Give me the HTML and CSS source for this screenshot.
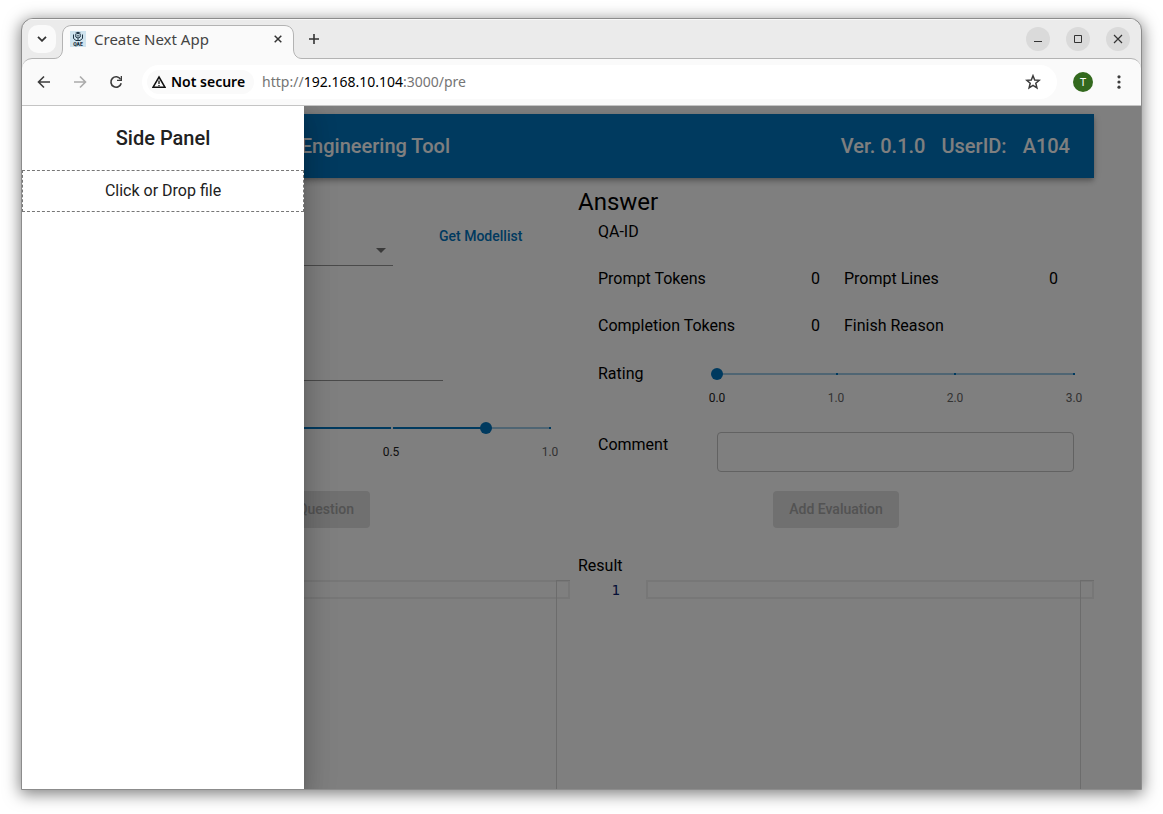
FILE: index.html
```html
<!DOCTYPE html>
<html lang="en">
<head>
<meta charset="utf-8">
<title>Create Next App</title>
<link rel="stylesheet" href="styles.css">
</head>
<body>
<div class="window">
  <header class="tabstrip">
    <button class="tab-search" aria-label="Search tabs">
      <svg width="10" height="6" viewBox="0 0 10 6"><path d="M1 .8 5 4.8 9 .8" fill="none" stroke="#333" stroke-width="1.8"/></svg>
    </button>
    <div class="tab">
      <svg class="tab-shape" width="248" height="34" viewBox="0 0 248 34">
        <path d="M0 33.5C5 33.5 8.500 30 8.500 24V10C8.500 4 12 .5 18 .5H230C236 .5 239.500 4 239.500 10V24C239.500 30 243 33.500 248 33.500V35H0Z" fill="#fafafa"/>
        <path d="M0 33.5C5 33.5 8.500 30 8.500 24V10C8.500 4 12 .5 18 .5H230C236 .5 239.500 4 239.500 10V24C239.500 30 243 33.500 248 33.500" fill="none" stroke="#b3b3b3"/>
      </svg>
      <svg class="favicon" width="16" height="16" viewBox="0 0 16 16">
        <rect width="16" height="16" fill="#cfe3ee"/>
        <path d="M5 2 8 .8 11 2 8 3.200Z" fill="#1d3242"/>
        <path d="M5.800 3V6Q8 8.500 10.200 6V3M3.500 3.500V7.500L6 9.500H10L12.500 7.500V3.500M8 7.500V10" fill="none" stroke="#1d3242"/>
        <path d="M7 4.500H9M7 6H9" stroke="#1d3242" stroke-width=".6"/>
        <text x="8" y="15" text-anchor="middle" font-family="Roboto, sans-serif" font-size="5" font-weight="900" fill="#1d3242">QAE</text>
      </svg>
      <span class="tab-title">Create Next App</span>
      <button class="icon-button" aria-label="Close tab">
        <svg width="8" height="8" viewBox="0 0 8 8"><path d="M.7 .7 7.300 7.300M7.300 .7 .7 7.300" stroke="#333" stroke-width="1.500"/></svg>
      </button>
    </div>
    <button class="icon-button new-tab" aria-label="New tab">
      <svg width="12" height="12" viewBox="0 0 12 12"><path d="M6 1V11M1 6H11" stroke="#333" stroke-width="1.600"/></svg>
    </button>
    <div class="window-controls">
      <button class="round" aria-label="Minimize"><svg width="10" height="10" viewBox="0 0 10 10"><path d="M1 7.500H9" stroke="#333"/></svg></button>
      <button class="round" aria-label="Maximize"><svg width="10" height="10" viewBox="0 0 10 10"><path d="M1.500 1.500H8.500V8.500H1.500Z" fill="none" stroke="#333"/></svg></button>
      <button class="round" aria-label="Close"><svg width="10" height="10" viewBox="0 0 10 10"><path d="M1 1 9 9M9 1 1 9" stroke="#333" stroke-width="1.200"/></svg></button>
    </div>
  </header>

  <nav class="toolbar">
    <div class="nav-buttons">
      <button class="icon-button" aria-label="Back"><svg width="14" height="14" viewBox="0 0 14 14"><path d="M13 7H2M7 1.500 1.500 7 7 12.500" fill="none" stroke="#3c3c3c" stroke-width="1.600"/></svg></button>
      <button class="icon-button" aria-label="Forward" disabled><svg width="14" height="14" viewBox="0 0 14 14"><path d="M1 7H12M7 1.500 12.500 7 7 12.500" fill="none" stroke="#ababab" stroke-width="1.600"/></svg></button>
      <button class="icon-button" aria-label="Reload"><svg width="14" height="14" viewBox="0 0 14 14"><path d="M11.600 4.300A5.200 5.200 0 1 0 12.200 8.200" fill="none" stroke="#3c3c3c" stroke-width="1.600"/><path d="M13 1V6H8V4.700H11.700V1Z" fill="#3c3c3c"/></svg></button>
    </div>
    <div class="omnibox">
      <button class="security">
        <svg width="14" height="14" viewBox="0 0 14 14"><path d="M7 2 13 12.300H1Z" fill="none" stroke="#111" stroke-width="1.500"/><path d="M7 5.500V9M7 9.900V11.200" stroke="#111" stroke-width="1.300"/></svg>
        <span>Not secure</span>
      </button>
      <span class="url">http://<b>192.168.10.104</b>:3000/pre</span>
      <button class="icon-button star" aria-label="Bookmark"><svg width="16" height="16" viewBox="0 0 16 16"><path d="M8 1.700 9.700 6 14.300 6.300 10.800 9.300 11.900 13.800 8 11.400 4.100 13.800 5.200 9.300 1.700 6.300 6.300 6Z" fill="none" stroke="#3c3c3c" stroke-width="1.500"/></svg></button>
    </div>
    <button class="avatar">T</button>
    <button class="icon-button menu" aria-label="Menu"><svg width="4" height="14" viewBox="0 0 4 14"><g fill="#3c3c3c"><circle cx="2" cy="1.800" r="1.600"/><circle cx="2" cy="7" r="1.600"/><circle cx="2" cy="12.200" r="1.600"/></g></svg></button>
  </nav>

  <div class="viewport">
    <div class="app">
      <div class="appbar">
        <h1 class="appbar-title">Engineering Tool</h1>
        <div class="appbar-info"><span>Ver. 0.1.0</span><span>UserID:</span><span>A104</span></div>
      </div>
      <main class="columns">
        <section class="column question">
          <div class="model-row">
            <div class="select-wrap">
              <select class="select" aria-label="Model"><option></option></select>
              <svg class="select-arrow" width="10" height="5" viewBox="0 0 10 5"><path d="M0 0H10L5 5Z" fill="#757575"/></svg>
            </div>
            <button class="text-button">Get Modellist</button>
          </div>
          <div class="prompt-row"><input class="line-input" type="text" aria-label="System prompt"></div>
          <div class="temperature-row">
            <div class="slider">
              <div class="slider-line">
                <div class="rail"><div class="fill" style="width:80%"></div></div>
                <div class="ticks"><i class="passed"></i><i class="passed"></i><i></i></div>
                <input type="range" min="0" max="1" step="0.1" value="0.8" aria-label="Temperature">
              </div>
              <div class="marks"><span></span><span class="active">0.5</span><span>1.0</span></div>
            </div>
          </div>
          <button class="contained send" disabled>Question</button>
          <div class="editor-title"></div>
          <div class="editor">
            <div class="gutter"></div><div class="current-line"></div><div class="ruler"></div>
          </div>
        </section>

        <section class="column">
          <div class="answer">
            <h2 class="heading">Answer</h2>
            <div class="body">
              <div class="stats">
                <div class="stat"><span>QA-ID</span></div><div class="stat"></div>
                <div class="stat"><span>Prompt Tokens</span><span>0</span></div>
                <div class="stat"><span>Prompt Lines</span><span>0</span></div>
                <div class="stat"><span>Completion Tokens</span><span>0</span></div>
                <div class="stat"><span>Finish Reason</span></div>
              </div>
              <div class="field rating">
                <label for="rating">Rating</label>
                <div class="slider">
                  <div class="slider-line">
                    <div class="rail"><div class="fill" style="width:0%"></div></div>
                    <div class="ticks"><i></i><i></i><i></i><i></i></div>
                    <input id="rating" type="range" min="0" max="3" step="0.1" value="0">
                  </div>
                  <div class="marks"><span class="active">0.0</span><span>1.0</span><span>2.0</span><span>3.0</span></div>
                </div>
              </div>
              <div class="field">
                <label for="comment">Comment</label>
                <input id="comment" class="outlined" type="text">
              </div>
            </div>
          </div>
          <button class="contained" disabled>Add Evaluation</button>
          <div class="editor-title">Result</div>
          <div class="editor">
            <div class="gutter">1</div><div class="current-line"></div><div class="ruler"></div>
          </div>
        </section>
      </main>
    </div>
    <div class="backdrop"></div>
    <aside class="drawer">
      <h2 class="drawer-title">Side Panel</h2>
      <button class="dropzone">Click or Drop file</button>
    </aside>
  </div>
</div>
</body>
</html>
```
FILE: styles.css
```css
* { box-sizing: border-box; }

body {
  margin: 0;
  height: 100vh;
  padding: 18px 21px 24px;
  background: #fff;
  font-family: Roboto, sans-serif;
  font-size: 16px;
  line-height: 24px;
  color: #000;
  overflow: hidden;
}

h1, h2 { margin: 0; font-weight: 500; }
button { margin: 0; padding: 0; border: 0; background: none; font: inherit; color: inherit; }
svg { display: block; flex: none; }

.window {
  height: 100%;
  display: flex;
  flex-direction: column;
  border: 1px solid #8c8c8c;
  border-radius: 12px 12px 0 0;
  background: #ebebeb;
  box-shadow: 0 3px 16px 1px rgba(0, 0, 0, .5);
  overflow: hidden;
}

/* Tab strip */
.tabstrip {
  flex: none;
  height: 39px;
  display: flex;
  align-items: center;
  padding: 0 11px 0 6px;
  box-shadow: inset 0 1px #f8f8f8;
  font-family: "Noto Sans", sans-serif;
}
.icon-button { display: flex; align-items: center; justify-content: center; width: 20px; height: 20px; flex: none; }
.tab-search {
  width: 28px; height: 28px;
  display: flex; align-items: center; justify-content: center;
  border-radius: 10px;
  background: #fafafa;
}
.tab {
  position: relative;
  width: 232px;
  height: 34px;
  margin-left: 6px;
  padding: 0 6px 6px 8px;
  display: flex;
  align-items: center;
  gap: 8px;
  align-self: flex-end;
  margin-bottom: -1px;
  z-index: 1;
}
.tab-shape { position: absolute; left: -8px; top: 0; }
.favicon, .tab-title, .tab .icon-button { position: relative; }
.tab-title { flex: 1; font-size: 15px; line-height: 20px; color: #444; white-space: nowrap; }
.new-tab { margin-left: 10px; }
.window-controls { margin-left: auto; display: flex; gap: 16px; }
.round {
  width: 24px; height: 24px;
  border-radius: 50%;
  background: #dadada;
  display: flex; align-items: center; justify-content: center;
}

/* Toolbar */
.toolbar {
  flex: none;
  height: 48px;
  display: flex;
  align-items: center;
  padding: 0 12px;
  border-top: 1px solid #b3b3b3;
  border-bottom: 1px solid #c4c4c4;
  border-radius: 10px 10px 0 0;
  background: #fafafa;
  font-family: "Noto Sans", sans-serif;
  font-size: 14px;
}
.nav-buttons { display: flex; gap: 16px; }
.omnibox {
  flex: 1;
  height: 34px;
  display: flex;
  align-items: center;
  margin: 0 16px;
  padding: 0 14px 0 5px;
  border-radius: 17px;
  background: #fff;
}
.security {
  height: 24px;
  display: flex;
  align-items: center;
  gap: 5px;
  padding: 0 9px 0 5px;
  border-radius: 12px;
  background: #fafafa;
  color: #000;
  font-weight: 600;
}
.url { margin-left: 8px; color: #757575; }
.url b { font-weight: 400; color: #000; }
.star { margin-left: auto; }
.avatar {
  width: 20px; height: 20px;
  border-radius: 50%;
  background: #33691e;
  color: #fff;
  font-size: 11px;
  line-height: 20px;
}
.menu { margin-left: 16px; }

/* Page */
.viewport { position: relative; flex: 1; min-height: 0; background: #fff; overflow: hidden; }
.app { height: 100%; display: flex; flex-direction: column; padding: 8px 47px 0 8px; }
.appbar {
  flex: none;
  height: 64px;
  padding: 0 24px;
  display: flex;
  align-items: center;
  justify-content: space-between;
  background: #0074be;
  color: #fff;
  box-shadow: 0 2px 4px -1px rgba(0, 0, 0, .2), 0 4px 5px rgba(0, 0, 0, .14), 0 1px 10px rgba(0, 0, 0, .12);
  font-size: 20px;
  line-height: 32px;
  font-weight: 500;
}
.appbar-title { width: 396px; font-size: 20px; text-align: right; }
.appbar-info { display: flex; gap: 16px; }
.columns { flex: 1; min-height: 0; display: grid; grid-template-columns: 540fr 516fr; gap: 8px; padding-top: 8px; }
.column { display: flex; flex-direction: column; min-height: 0; }

.heading { font-size: 24px; line-height: 32px; font-weight: 400; }
.body { padding: 2px 20px 0; }
.stats { display: grid; grid-template-columns: 222fr 214fr; gap: 23px 24px; padding-right: 16px; }
.stat { display: flex; justify-content: space-between; }
.field { display: grid; grid-template-columns: 119px 1fr; align-items: start; }
.field label { padding-top: 1px; }
.rating { margin: 23px 0 26px; }
.rating .slider { padding-top: 7px; }
.outlined { width: 100%; height: 40px; padding: 8px 14px; border: 1px solid #c4c4c4; border-radius: 4px; background: none; font: inherit; }

.slider-line { display: grid; height: 12px; align-items: center; }
.slider-line > * { grid-area: 1 / 1; }
.rail { height: 2px; background: #9ecae6; }
.fill { height: 2px; background: #0074be; }
.ticks { display: flex; justify-content: space-between; margin-right: -1px; }
.ticks i { width: 2px; height: 2px; background: #0074be; }
.ticks .passed { background: #f2f8fc; }
.slider input {
  appearance: none;
  width: calc(100% + 12px);
  height: 12px;
  margin: 0 0 0 -6px;
  background: none;
}
.slider input::-webkit-slider-thumb { appearance: none; width: 12px; height: 12px; border-radius: 50%; background: #0074be; }
.marks { display: flex; justify-content: space-between; margin-top: 10px; font-size: 12px; line-height: 16px; color: #666; }
.marks span { width: 0; display: flex; justify-content: center; }
.marks .active { color: #212121; }

.contained {
  align-self: center;
  height: 37px;
  flex: none;
  margin-top: 19px;
  padding: 0 16px 2px;
  border-radius: 4px;
  background: #e0e0e0;
  color: #a6a6a6;
  font-size: 14px;
  font-weight: 500;
}
.send { width: 140px; text-align: right; }

.question .model-row {
  display: grid;
  grid-template-columns: 343fr 119fr;
  gap: 38px;
  align-items: start;
  padding: 32px 20px 0;
}
.select-wrap { position: relative; margin-top: 16px; }
.select { display: block; width: 100%; height: 32px; appearance: none; border: 0; border-bottom: 1px solid #949494; border-radius: 0; background: none; font: inherit; }
.select-arrow { position: absolute; right: 7px; top: 14px; }
.text-button { height: 36px; padding: 0 8px; justify-self: start; color: #0074be; font-size: 14px; font-weight: 500; }
.prompt-row { display: grid; grid-template-columns: 393fr 107fr; padding: 83px 20px 0; }
.line-input { width: 100%; height: 32px; border: 0; border-bottom: 1px solid #949494; background: none; font: inherit; }
.temperature-row { display: grid; grid-template-columns: 182fr 318fr; padding: 41px 20px 12px; }
.temperature-row .slider { grid-column: 2; }

.editor-title { height: 24px; flex: none; margin-top: 26px; }
.editor { flex: 1; display: grid; grid-template-columns: 68px 1fr 14px; grid-template-rows: 19px 1fr; margin-top: 2px; }
.gutter { padding-right: 26px; text-align: right; font-family: "DejaVu Sans Mono", monospace; font-size: 14px; line-height: 20px; color: #0b216f; }
.current-line { grid-area: 1 / 2 / 2 / 4; border: 2px solid #eee; }
.ruler { grid-area: 1 / 3 / 3 / 4; border-left: 1px solid #d8d8d8; border-top: 1px solid #d8d8d8; }

/* Drawer */
.backdrop { position: absolute; inset: 0; background: rgba(0, 0, 0, .5); }
.drawer {
  position: absolute;
  inset: 0 auto 0 0;
  width: 282px;
  background: #fff;
  color: #212121;
  box-shadow: 0 8px 10px -5px rgba(0, 0, 0, .2), 0 16px 24px 2px rgba(0, 0, 0, .14), 0 6px 30px 5px rgba(0, 0, 0, .12);
}
.drawer-title { padding: 16px 0; font-size: 20px; line-height: 32px; text-align: center; }
.dropzone { display: block; width: 100%; height: 42px; border: 1px dashed #777; text-align: center; }
```
